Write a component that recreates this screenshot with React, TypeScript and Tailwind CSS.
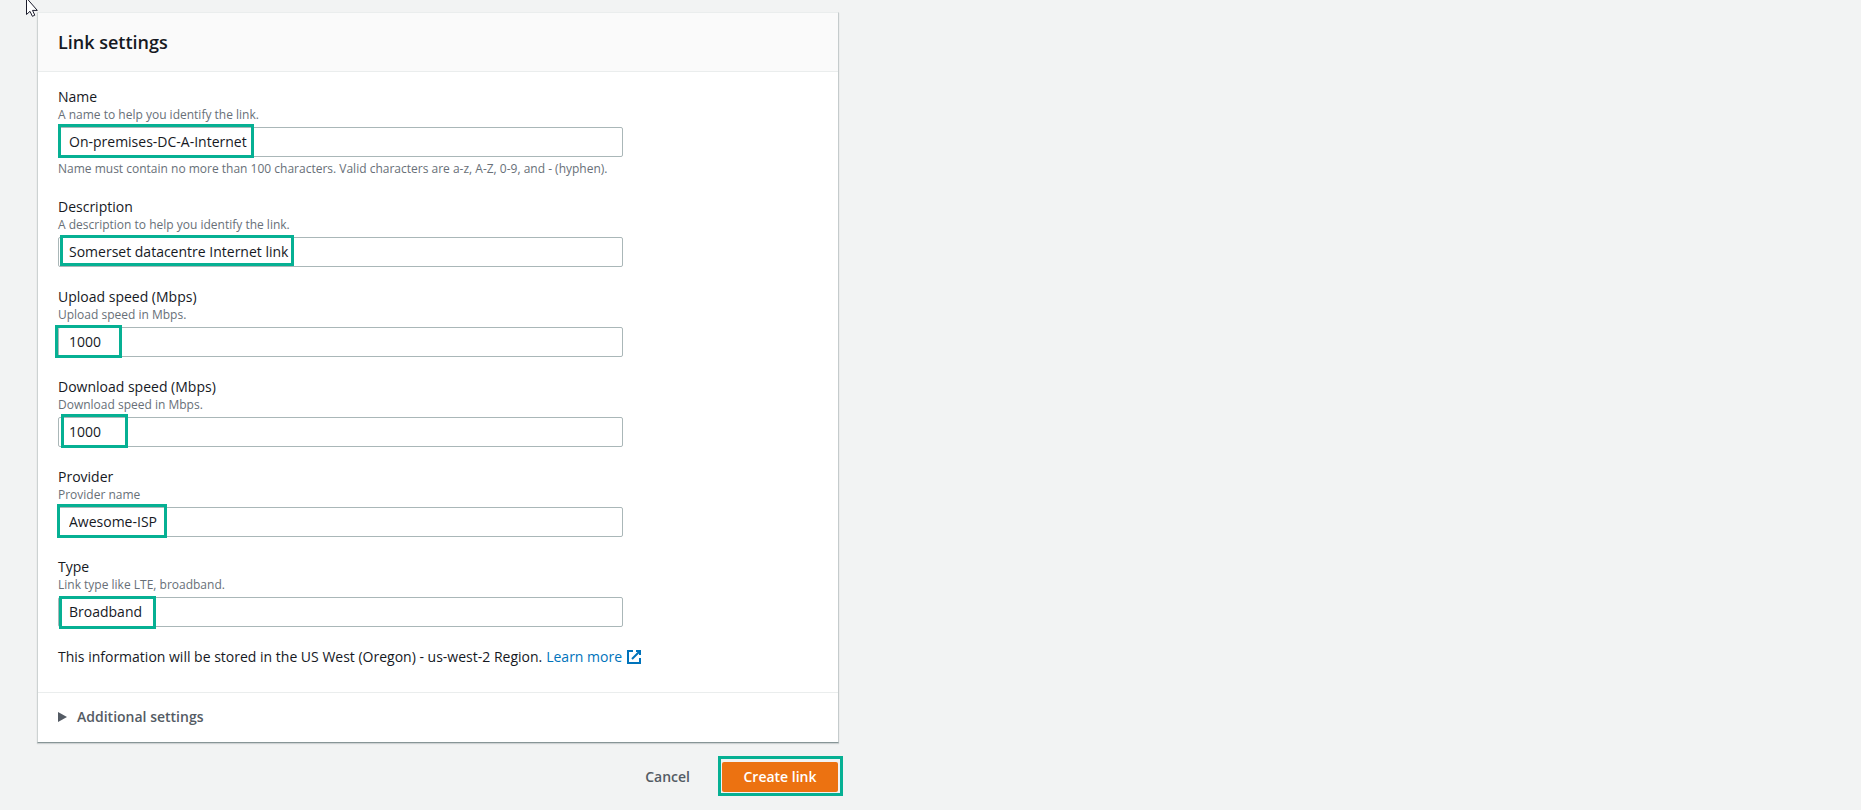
import { useState } from "react";

type Field = {
  id: string;
  label: string;
  hint: string;
  value: string;
  constraint?: string;
  highlight: string;
};

const fields: Field[] = [
  {
    id: "name",
    label: "Name",
    hint: "A name to help you identify the link.",
    value: "On-premises-DC-A-Internet",
    constraint:
      "Name must contain no more than 100 characters. Valid characters are a-z, A-Z, 0-9, and - (hyphen).",
    highlight: "left-0 -top-[3px] w-[196px] h-[34px]",
  },
  {
    id: "description",
    label: "Description",
    hint: "A description to help you identify the link.",
    value: "Somerset datacentre Internet link",
    highlight: "left-[2px] -top-[2px] w-[234px] h-[31px]",
  },
  {
    id: "upload",
    label: "Upload speed (Mbps)",
    hint: "Upload speed in Mbps.",
    value: "1000",
    highlight: "-left-[3px] -top-[2px] w-[67px] h-[33px]",
  },
  {
    id: "download",
    label: "Download speed (Mbps)",
    hint: "Download speed in Mbps.",
    value: "1000",
    highlight: "left-[3px] -top-[3px] w-[67px] h-[34px]",
  },
  {
    id: "provider",
    label: "Provider",
    hint: "Provider name",
    value: "Awesome-ISP",
    highlight: "-left-[1px] -top-[3px] w-[110px] h-[34px]",
  },
  {
    id: "type",
    label: "Type",
    hint: "Link type like LTE, broadband.",
    value: "Broadband",
    highlight: "left-[1px] -top-[1px] w-[97px] h-[33px]",
  },
];

function FormField({ field }: { field: Field }) {
  const [value, setValue] = useState(field.value);

  return (
    <div className="flex flex-col items-start">
      <label htmlFor={field.id} className="text-sm leading-5">
        {field.label}
      </label>
      <p id={`${field.id}-hint`} className="text-xs leading-4 text-[#687078]">
        {field.hint}
      </p>
      <div className="relative mt-1 w-full max-w-[565px]">
        <input
          id={field.id}
          type="text"
          value={value}
          onChange={(e) => setValue(e.target.value)}
          aria-describedby={`${field.id}-hint`}
          className="block h-[30px] w-full rounded-xs border border-[#aab7b8] bg-white px-[10px] pb-px text-sm outline-none"
        />
        <span
          className={`pointer-events-none absolute border-3 border-[#06b093] ${field.highlight}`}
        />
      </div>
      {field.constraint && (
        <p className="mt-1 text-xs leading-4 text-[#687078]">
          {field.constraint}
        </p>
      )}
    </div>
  );
}

function ExternalIcon() {
  return (
    <svg
      viewBox="0 0 16 16"
      className="h-4 w-4"
      fill="none"
      stroke="currentColor"
      strokeWidth="2"
    >
      <path d="M14 9v5H2V2h5" />
      <path d="M10 2h4v4M6 10l8-8" />
    </svg>
  );
}

function Cursor() {
  return (
    <svg
      viewBox="0 0 13 18"
      className="absolute left-[26px] top-0 h-[18px] w-[13px]"
    >
      <path
        d="M.5-2v16.5l3.5-3.2 2.4 5 2.4-1.1-2.3-4.8h4.8z"
        fill="#fff"
        stroke="#1c1c2c"
      />
    </svg>
  );
}

export default function App() {
  return (
    <div className="relative min-h-screen bg-[#f2f3f3] font-['Open_Sans','Noto_Sans',sans-serif] text-[#16191f]">
      <Cursor />
      <main className="ml-[37px] max-w-[802px] pt-3">
        <section className="border border-b-[#879596] border-l-[#cdd2d2] border-r-[#c5cbcc] border-t-[#eaeded] bg-white shadow-[0_1px_1px_0_rgba(0,28,36,0.15)]">
          <header className="border-b border-[#eaeded] bg-[#fafafa] px-5 py-4">
            <h1 className="text-lg font-semibold leading-[26px]">
              Link settings
            </h1>
          </header>

          <form className="flex flex-col gap-5 px-5 pb-[25px] pt-[15px]">
            {fields.map((field) => (
              <FormField key={field.id} field={field} />
            ))}
            <p className="flex items-center gap-1 text-sm leading-5">
              This information will be stored in the US West (Oregon) -
              us-west-2 Region.
              <a
                href="#"
                className="inline-flex items-center gap-1 text-[#0073bb]"
              >
                Learn more
                <ExternalIcon />
              </a>
            </p>
          </form>

          <div className="border-t border-[#eaeded] px-5 pb-[15px] pt-[14px]">
            <button
              type="button"
              className="flex items-center gap-[10px] text-sm font-semibold leading-5 text-[#545b64]"
            >
              <svg
                viewBox="0 0 9 10"
                className="h-[10px] w-[9px]"
                fill="currentColor"
              >
                <path d="M0 0 9 5 0 10z" />
              </svg>
              Additional settings
            </button>
          </div>
        </section>

        <div className="mt-[19px] flex items-center justify-end gap-3 pr-px">
          <button
            type="button"
            className="h-[30px] px-5 text-sm font-semibold text-[#545b64]"
          >
            Cancel
          </button>
          <div className="relative">
            <button
              type="button"
              className="h-[30px] min-w-[116px] rounded-xs bg-[#ec7211] px-5 text-sm font-semibold text-white"
            >
              Create link
            </button>
            <span className="pointer-events-none absolute -bottom-1 -left-1 -right-[5px] -top-[6px] border-3 border-[#06b093]" />
          </div>
        </div>
      </main>
    </div>
  );
}
